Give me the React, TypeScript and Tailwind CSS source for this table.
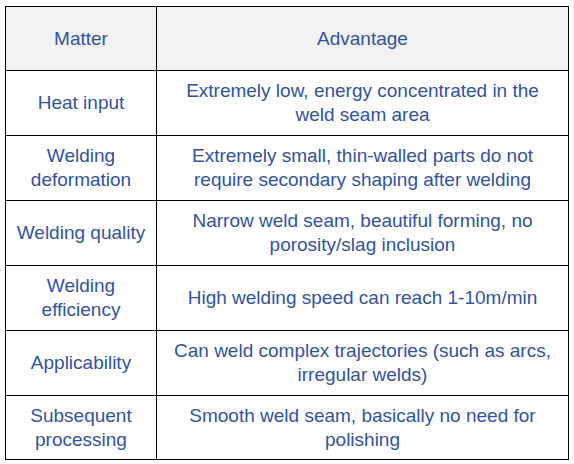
import React from "react";

const rows: [string, string, boolean][] = [
  ["Heat input", "Extremely low, energy concentrated in the weld seam area", false],
  ["Welding deformation", "Extremely small, thin-walled parts do not require secondary shaping after welding", false],
  ["Welding quality", "Narrow weld seam, beautiful forming, no porosity/slag inclusion", false],
  ["Welding efficiency", "High welding speed can reach 1-10m/min", false],
  ["Applicability", "Can weld complex trajectories (such as arcs, irregular welds)", false],
  ["Subsequent processing", "Smooth weld seam, basically no need for polishing", true],
];

export default function App() {
  return (
    <div className="w-[574px] h-[464px] bg-white pt-[6px] pl-[5px]" style={{ fontFamily: '"Liberation Sans", Arial, sans-serif' }}>
      <div className="w-[564px] border border-black text-[#3153a6] text-[19px] leading-[24px]">
        <div className="flex h-[63px] bg-[#f2f2f2]">
          <div className="w-[151px] border-r border-black flex items-center justify-center text-center px-2">Matter</div>
          <div className="flex-1 flex items-center justify-center text-center px-2">Advantage</div>
        </div>
        {rows.map(([a, b, last], i) => (
          <div key={i} className={`flex border-t border-black ${last ? "h-[64px]" : "h-[65px]"}`}>
            <div className="w-[151px] border-r border-black flex items-center justify-center text-center px-2">{a}</div>
            <div className="flex-1 flex items-center justify-center text-center px-3">{b}</div>
          </div>
        ))}
      </div>
    </div>
  );
}
